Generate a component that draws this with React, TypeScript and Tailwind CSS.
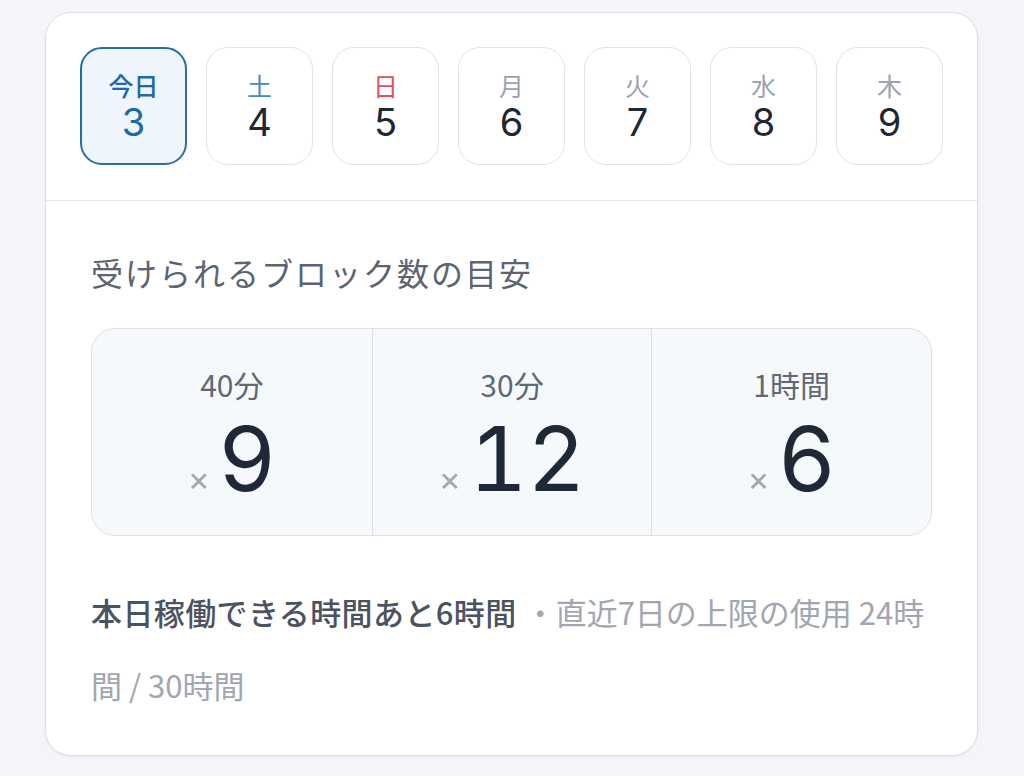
import React from "react";

const JP = { fontFamily: '"Noto Sans CJK JP", "Noto Sans", sans-serif' };
const NUM = { fontFamily: 'Inter, "Noto Sans CJK JP", sans-serif' };

type Day = { label: string; num: string; tone: "today" | "sat" | "sun" | "week" };

const days: Day[] = [
  { label: "今日", num: "3", tone: "today" },
  { label: "土", num: "4", tone: "sat" },
  { label: "日", num: "5", tone: "sun" },
  { label: "月", num: "6", tone: "week" },
  { label: "火", num: "7", tone: "week" },
  { label: "水", num: "8", tone: "week" },
  { label: "木", num: "9", tone: "week" },
];

function DayPill({ d }: { d: Day }) {
  const isToday = d.tone === "today";
  const labelColor =
    d.tone === "today"
      ? "text-[#1d6aa8] font-medium"
      : d.tone === "sat"
      ? "text-[#4a88bf]"
      : d.tone === "sun"
      ? "text-[#e0505e]"
      : "text-[#9aa3ae]";
  return (
    <div
      className={
        isToday
          ? "w-[107px] h-[118px] rounded-[22px] border-2 border-[#2a6ca6] bg-[#eef5fc] flex flex-col items-center justify-center"
          : "w-[107px] h-[118px] rounded-[22px] border-[1.5px] border-[#dfe2e6] bg-white flex flex-col items-center justify-center"
      }
    >
      <div className={`text-[25px] leading-[28px] ${labelColor}`} style={JP}>
        {d.label}
      </div>
      <div
        className={`text-[38px] leading-[40px] mt-[3px] ${isToday ? "text-[#1d6aa8]" : "text-[#1f2733]"}`}
        style={NUM}
      >
        {d.num}
      </div>
    </div>
  );
}

function Stat({ label, value, first }: { label: string; value: string; first?: boolean }) {
  return (
    <div className={`flex flex-col items-center pt-[37px] ${first ? "" : "border-l border-[#dde1e6]"}`}>
      <div className="text-[30px] leading-[36px] text-[#5f6873]" style={JP}>
        {label}
      </div>
      <div className="flex items-baseline justify-center mt-[12px]">
        <span className="text-[34px] leading-none text-[#a3a9b1] mr-[8px]" style={NUM}>
          ×
        </span>
        <span className="text-[90px] leading-[90px] text-[#1e2836] tabular-nums" style={NUM}>
          {value}
        </span>
      </div>
    </div>
  );
}

export default function App() {
  return (
    <div className="min-h-[776px] w-full bg-[#f3f5f8] pt-[12px] pl-[45px]" style={JP}>
      <div className="w-[933px] rounded-[26px] border border-[#dde1e6] bg-white shadow-[0_1px_3px_rgba(0,0,0,0.06)] overflow-hidden">
        <div className="flex gap-[19px] px-[34px] pt-[34px] pb-[35px] border-b border-[#e3e6ea]">
          {days.map((d) => (
            <DayPill key={d.label} d={d} />
          ))}
        </div>
        <div className="px-[45px] pt-[47px] pb-[34px]">
          <div className="text-[32px] leading-[48px] tracking-[2px] text-[#5b6470]" style={JP}>
            受けられるブロック数の目安
          </div>
          <div className="mt-[32px] h-[208px] grid grid-cols-3 rounded-[24px] border border-[#dde1e6] bg-[#f6f9fc]">
            <Stat label="40分" value="9" first />
            <Stat label="30分" value="12" />
            <Stat label="1時間" value="6" />
          </div>
          <div className="mt-[39px] text-[31px] leading-[73px]" style={JP}>
            <span className="font-medium text-[#4b5360] tracking-[0.4px]">本日稼働できる時間あと6時間</span>
            <span className="text-[#a0a7b0] ml-[8px]">・直近7日の上限の使用 24時間 / 30時間</span>
          </div>
        </div>
      </div>
    </div>
  );
}
